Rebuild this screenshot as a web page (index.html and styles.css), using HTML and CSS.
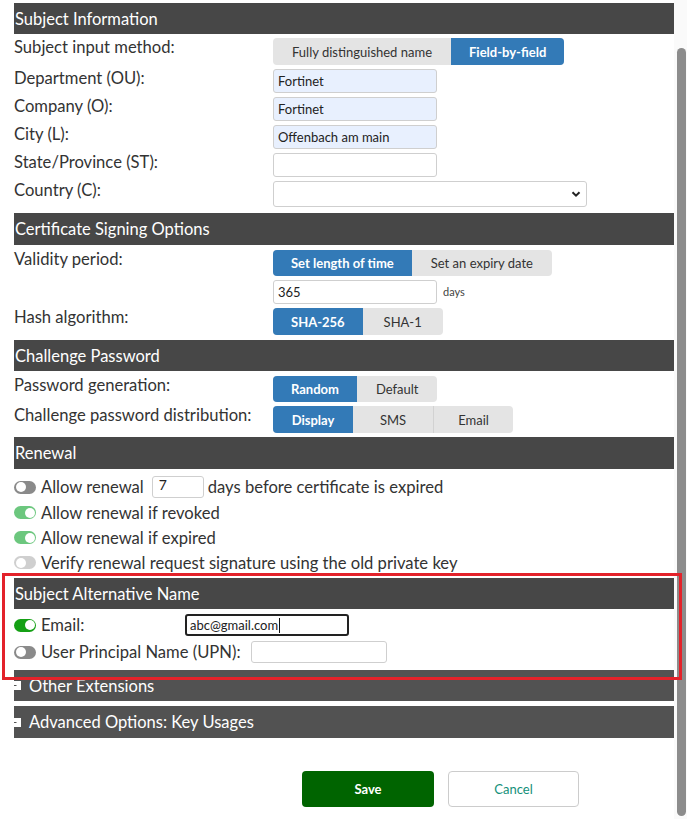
FILE: index.html
```html
<!DOCTYPE html>
<html>
<head>
<meta charset="utf-8">
<link rel="stylesheet" href="styles.css">
</head>
<body>
<div class="page">
  <div class="content">
    <div class="hdr">Subject Information</div>
    <div class="row r-btn">
      <div class="label">Subject input method:</div>
      <div class="seg"><span class="sb">Fully distinguished name</span><span class="sb on">Field-by-field</span></div>
    </div>
    <div class="row r-in">
      <div class="label">Department (OU):</div>
      <div class="inp fill">Fortinet</div>
    </div>
    <div class="row r-in">
      <div class="label">Company (O):</div>
      <div class="inp fill">Fortinet</div>
    </div>
    <div class="row r-in">
      <div class="label">City (L):</div>
      <div class="inp fill">Offenbach am main</div>
    </div>
    <div class="row r-in">
      <div class="label">State/Province (ST):</div>
      <div class="inp"></div>
    </div>
    <div class="row r-in">
      <div class="label">Country (C):</div>
      <div class="select"><svg width="10" height="8" viewBox="0 0 10 8"><path d="M1.5 2.2 L5 5.7 L8.5 2.2" fill="none" stroke="#222" stroke-width="2"/></svg></div>
    </div>

    <div class="hdr h2">Certificate Signing Options</div>
    <div class="row r-btn2">
      <div class="label">Validity period:</div>
      <div class="seg s26"><span class="sb on">Set length of time</span><span class="sb">Set an expiry date</span></div>
    </div>
    <div class="row r-in">
      <div class="label"></div>
      <div class="inp">365</div><span class="days">days</span>
    </div>
    <div class="row r-btn">
      <div class="label">Hash algorithm:</div>
      <div class="seg"><span class="sb on">SHA-256</span><span class="sb">SHA-1</span></div>
    </div>

    <div class="hdr h3">Challenge Password</div>
    <div class="row r-btn3">
      <div class="label">Password generation:</div>
      <div class="seg s26"><span class="sb on">Random</span><span class="sb">Default</span></div>
    </div>
    <div class="row r-btn">
      <div class="label">Challenge password distribution:</div>
      <div class="seg"><span class="sb on">Display</span><span class="sb">SMS</span><span class="sb sep">Email</span></div>
    </div>

    <div class="hdr h4">Renewal</div>
    <div class="renew">
      <div class="tr first"><span class="tg off"></span><span>Allow renewal</span><span class="inp small">7</span><span>days before certificate is expired</span></div>
      <div class="tr"><span class="tg green"></span><span>Allow renewal if revoked</span></div>
      <div class="tr"><span class="tg green"></span><span>Allow renewal if expired</span></div>
      <div class="tr"><span class="tg dis"></span><span>Verify renewal request signature using the old private key</span></div>
    </div>

    <div class="hdr h5">Subject Alternative Name</div>
    <div class="san">
      <div class="sr"><span class="tg bright"></span><span class="elabel">Email:</span><span class="inp focus">abc@gmail.com<span class="caret"></span></span></div>
      <div class="sr"><span class="tg off"></span><span class="ulabel">User Principal Name (UPN):</span><span class="inp upn"></span></div>
    </div>

    <div class="hdr coll h6"><svg class="plus" width="7" height="9" viewBox="0 0 7 9"><rect x="0" y="0" width="7" height="9" fill="#fff"/><path d="M0 4.5 H2.5" stroke="#555" stroke-width="1"/></svg>Other Extensions</div>
    <div class="hdr coll h7"><svg class="plus" width="7" height="9" viewBox="0 0 7 9"><rect x="0" y="0" width="7" height="9" fill="#fff"/><path d="M0 4.5 H2.5" stroke="#555" stroke-width="1"/></svg>Advanced Options: Key Usages</div>

    <div class="actions">
      <button class="btn save">Save</button>
      <button class="btn cancel">Cancel</button>
    </div>
  </div>
  <div class="scrollbar"><div class="thumb"></div></div>
  <div class="redbox"></div>
</div>
</body>
</html>
```

FILE: styles.css
```css
* { box-sizing: border-box; }
html, body { margin: 0; padding: 0; background: #fff; }
body { font-family: Lato, "Open Sans", sans-serif; color: #333; }

.page {
  position: relative;
  display: flex;
  width: 687px;
  height: 819px;
  overflow: hidden;
}
.content {
  width: 674px;
  padding-left: 14px;
  padding-top: 3px;
}
.scrollbar {
  width: 13px;
  background: #fafafa;
  padding: 48px 1px 0 3px;
}
.thumb {
  width: 9px;
  height: 768px;
  background: #8c8c8c;
  border-radius: 5px;
}

.hdr {
  height: 31px;
  background: #474747;
  color: #fff;
  font-size: 16.5px;
  display: flex;
  align-items: center;
  padding-left: 1px;
}
.h2 { margin-top: 6px; height: 32px; }
.h3 { margin-top: 5px; }
.h4 { margin-top: 4px; height: 32px; }
.h5 { margin-top: 3px; }
.h6 { margin-top: 7px; }
.h7 { margin-top: 5px; height: 32px; }
.coll { background: #525252; padding-left: 0; }
.plus { margin-right: 8px; }

.row {
  display: flex;
  align-items: flex-start;
  margin-top: 4px;
}
.r-btn2, .r-btn3 { margin-top: 5px; }
.label {
  width: 259px;
  font-size: 16.6px;
  line-height: 20px;
  color: #333;
  margin-top: -1px;
}

.seg {
  display: flex;
  height: 27px;
  border-radius: 4px;
  overflow: hidden;
  background: #e4e4e4;
}
.seg.s26 { height: 26px; }
.sb {
  display: flex;
  align-items: center;
  justify-content: center;
  min-width: 80px;
  padding: 0 19px;
  font-size: 13px;
  color: #333;
}
.sb.on {
  background: #337ab7;
  color: #fff;
  font-weight: 700;
  padding: 0 18px;
}
.sb.sep { border-left: 1px solid #d2d2d2; }

.inp {
  display: flex;
  align-items: center;
  width: 164px;
  height: 24px;
  border: 1px solid #cfcfcf;
  border-radius: 3px;
  background: #fff;
  font-size: 13px;
  color: #222;
  padding-left: 4px;
}
.inp.fill { background: #e8f0fe; }
.days {
  font-size: 11px;
  color: #444;
  margin-left: 6px;
  line-height: 24px;
}
.select {
  width: 314px;
  height: 26px;
  border: 1px solid #cfcfcf;
  border-radius: 3px;
  display: flex;
  align-items: center;
  justify-content: flex-end;
  padding-right: 5px;
}

.renew { margin-top: 5px; }
.tr {
  display: flex;
  align-items: center;
  height: 25px;
  font-size: 16.6px;
  color: #333;
}
.tr.first { height: 26px; }
.tg {
  position: relative;
  width: 22px;
  height: 13px;
  border-radius: 7px;
  margin-right: 5px;
  flex: none;
}
.tg::after {
  content: "";
  position: absolute;
  top: 1.5px;
  width: 10px;
  height: 10px;
  border-radius: 50%;
  background: #fff;
}
.tg.off { background: #8a8a8a; }
.tg.off::after, .tg.dis::after { left: 1.5px; }
.tg.dis { background: #cfcfcf; }
.tg.green { background: #6cc77e; }
.tg.bright { background: #15a015; }
.tg.green::after, .tg.bright::after { right: 1.5px; }

.inp.small {
  width: 52px;
  height: 22px;
  margin: 0 4px 0 8px;
  align-items: flex-start;
  font-size: 14px;
  padding-left: 6px;
  line-height: 16px;
}

.san { margin-top: 5px; }
.sr {
  display: flex;
  align-items: center;
  height: 22px;
  font-size: 16.6px;
  color: #333;
}
.sr + .sr { margin-top: 5px; }
.elabel { width: 144px; }
.ulabel { margin-right: 10px; }
.inp.focus {
  width: 164px;
  height: 22px;
  border: 2px solid #222;
  border-radius: 3px;
  padding-left: 3px;
}
.caret {
  display: inline-block;
  width: 1px;
  height: 15px;
  background: #111;
  margin-left: 1px;
}
.inp.upn { width: 136px; height: 22px; }

.actions {
  display: flex;
  margin-top: 33px;
  padding-left: 288px;
  gap: 14px;
}
.btn {
  height: 36px;
  border-radius: 4px;
  font-family: Lato, sans-serif;
  font-size: 13px;
  padding: 0;
}
.save {
  width: 132px;
  background: #006400;
  border: none;
  color: #fff;
  font-weight: 700;
}
.cancel {
  width: 131px;
  background: #fff;
  border: 1px solid #cccccc;
  color: #14907a;
}

.redbox {
  position: absolute;
  left: 2px;
  top: 573px;
  width: 680px;
  height: 107px;
  border: 3px solid #e3222a;
  pointer-events: none;
}
```
